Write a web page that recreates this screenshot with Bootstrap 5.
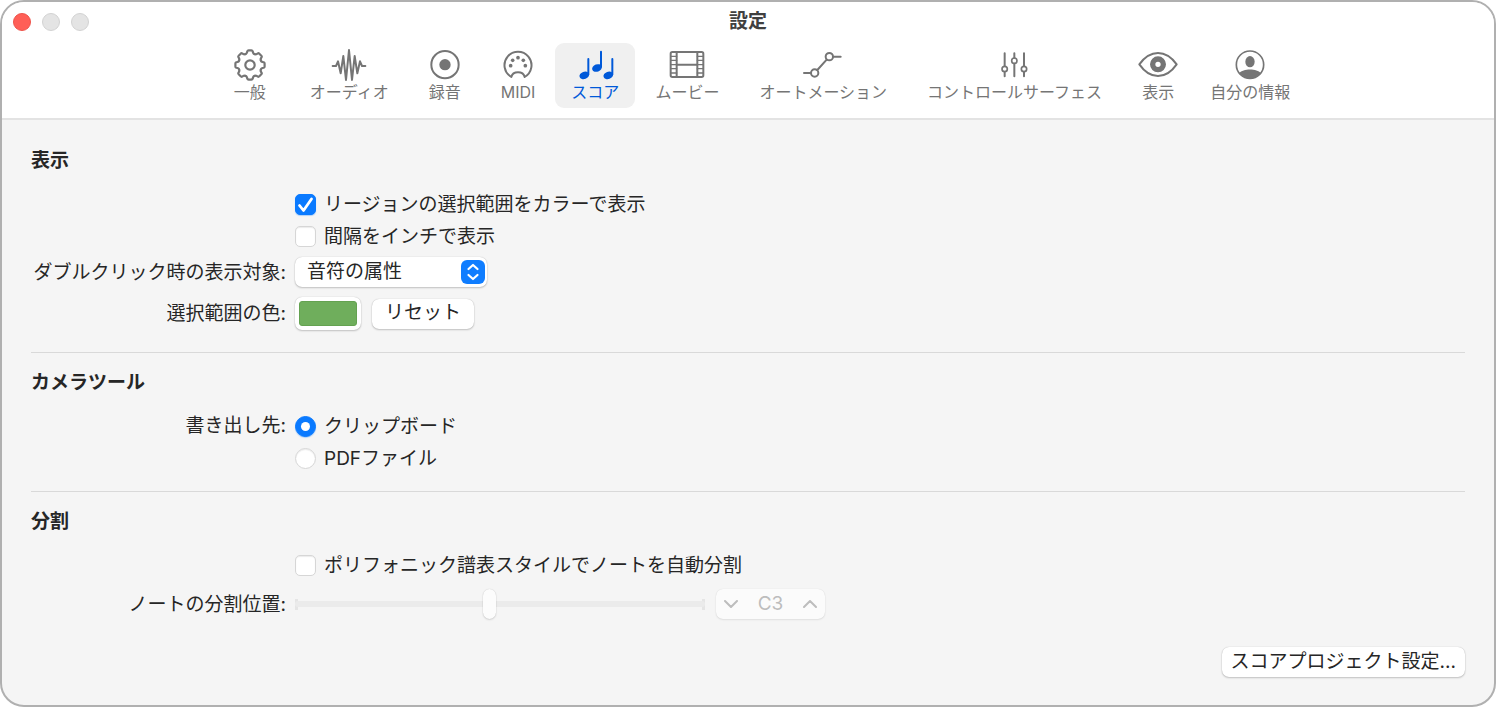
<!DOCTYPE html>
<html lang="ja">
<head>
<meta charset="utf-8">
<meta name="viewport" content="width=device-width, initial-scale=1">
<title>設定</title>
<link href="https://cdn.jsdelivr.net/npm/bootstrap@5.3.0/dist/css/bootstrap.min.css" rel="stylesheet">
<style>
  body { font-family: Inter, "Noto Sans CJK JP", sans-serif; font-size: 19px; line-height: 28px; color: #262626; background: #fff; }
  .app-window { margin: 0 2px 2px 0; border: 2px solid #b0b0b0; border-radius: 24px; background: #f5f5f5; overflow: hidden; }
  .window-head { background: #fff; border-bottom: 2px solid #e3e3e3; }

  .title-bar { display: grid; grid-template-columns: 1fr auto 1fr; align-items: center; height: 40px; padding: 0 11px; }
  .title-bar h1 { font-size: 19px; line-height: 28px; font-weight: 700; color: #404040; }
  .lights, .pair { gap: 11px; }
  .light { width: 18px; height: 18px; padding: 0; border: 1px solid #d2d2d2; border-radius: 50%; background: #e4e4e4; }
  .light-close { background: #ff5f57; border-color: #ee534b; }

  .tool-bar { padding: 1px 0 10px 28px; gap: 4px; }
  .tool { padding: 6px 16px; gap: 1px; border: 0; border-radius: 9px; background: transparent; color: #757575; font-size: 16px; line-height: 20px; white-space: nowrap; }
  .tool.active { background: #f0f0f0; color: #0059d9; }
  .tool svg { width: 40px; height: 32px; margin: 0 -4px; fill: none; stroke: currentColor; stroke-linecap: round; stroke-linejoin: round; }
  .solid { fill: currentColor; stroke: none; }

  .pane { padding: 11px 29px 28px; }
  .pane section { padding: 16px 0 17px; }
  .pane section + section { border-top: 1px solid #d9d9d9; }
  .pane section:last-of-type { padding-bottom: 0; }
  .pane h2 { font-size: 19px; line-height: 28px; font-weight: 700; margin: 0 0 13px; }
  .pane label { padding-top: 1px; }
  .setting { display: grid; grid-template-columns: 255px 1fr; column-gap: 9px; align-items: center; min-height: 32px; }
  .setting > :first-child { text-align: right; white-space: nowrap; }
  .setting > :only-child { grid-column: 2; text-align: left; }
  .setting-select { min-height: 40px; }
  .setting-color { min-height: 43px; }
  .setting-slider { min-height: 46px; }

  .tick.form-check-input { width: 21px; height: 21px; margin: 0; border: 1px solid #d6d6d6; background-color: #fff; box-shadow: inset 0 1px 1px rgba(0,0,0,.08); }
  .tick.form-check-input[type=checkbox] { border-radius: 5px; }
  .tick.form-check-input:checked { border-color: #0a7aff; background-color: #0a7aff; box-shadow: 0 1px 1px rgba(10,122,255,.3); }
  .tick.form-check-input:checked[type=checkbox] { background-size: 21px; background-position: center; background-image: url("data:image/svg+xml,%3csvg xmlns='http://www.w3.org/2000/svg' viewBox='0 0 21 21'%3e%3cpath d='M4.500 11.500l4 5L16.500 5' fill='none' stroke='%23fff' stroke-width='2.800' stroke-linecap='round' stroke-linejoin='round'/%3e%3c/svg%3e"); }
  .tick.form-check-input:checked[type=radio] { background-size: 21px; background-position: center; background-image: url("data:image/svg+xml,%3csvg xmlns='http://www.w3.org/2000/svg' viewBox='0 0 21 21'%3e%3ccircle cx='10.500' cy='10.500' r='4.500' fill='%23fff'/%3e%3c/svg%3e"); }

  .raised { border: 0; border-radius: 7px; background-color: #fff; color: #262626; font-size: 19px; line-height: 28px; box-shadow: 0 0 1px rgba(0,0,0,.25), 0 1px 2px rgba(0,0,0,.2); }
  .btn.raised { height: 30px; padding: 0 13px 1px; }
  .btn.raised.btn-tight { padding: 0 9px 1px; }
  .pop-up.form-select { width: 192px; height: 30px; padding: 0 32px 0 12px; background-size: 24px 24px; background-position: right 2px center; background-image: url("data:image/svg+xml,%3csvg xmlns='http://www.w3.org/2000/svg' viewBox='0 0 24 24'%3e%3crect width='24' height='24' rx='6' fill='%230f7dff'/%3e%3cpath d='M7.500 9L12 5l4.500 4M7.500 15l4.500 4 4.500-4' fill='none' stroke='%23fff' stroke-width='2.200' stroke-linecap='round' stroke-linejoin='round'/%3e%3c/svg%3e"); }
  .well.form-control-color { width: 66px; height: 33px; padding: 4px; border-radius: 7px; }
  .well::-webkit-color-swatch-wrapper { padding: 0; }
  .well.form-control-color::-webkit-color-swatch { border: 1px solid #64a251; border-radius: 3px; }

  .split-range.form-range { width: 410px; height: 30px; background: linear-gradient(#e5e5e5,#e5e5e5) left center/3px 11px no-repeat, linear-gradient(#e5e5e5,#e5e5e5) right center/3px 11px no-repeat; }
  .split-range.form-range::-webkit-slider-runnable-track { height: 6px; background: #ebebeb; border-radius: 3px; }
  .split-range.form-range::-webkit-slider-thumb { width: 13px; height: 30px; margin-top: -12px; border-radius: 7px; background: #fcfcfc; box-shadow: 0 0 1px rgba(0,0,0,.2), 0 1px 2px rgba(0,0,0,.12); }
  .stepper { width: 109px; height: 30px; border-radius: 7px; background: #fbfbfb; color: #bdbdbd; box-shadow: 0 0 1px rgba(0,0,0,.14), 0 1px 2px rgba(0,0,0,.08); }
  .stepper button { width: 30px; height: 30px; padding: 0; border: 0; background: none; color: inherit; }
  .stepper svg { display: block; margin: auto; width: 14px; height: 8px; fill: none; stroke: currentColor; stroke-width: 2; stroke-linecap: round; stroke-linejoin: round; }
  .pane-foot { margin-top: 20px; }
</style>
</head>
<body>
<main class="app-window">
  <header class="window-head">
    <div class="title-bar">
      <div class="lights d-flex">
        <button class="light light-close" type="button" aria-label="閉じる"></button>
        <button class="light" type="button" aria-label="しまう" disabled></button>
        <button class="light" type="button" aria-label="拡大" disabled></button>
      </div>
      <h1 class="m-0">設定</h1>
    </div>
    <nav class="tool-bar d-flex justify-content-center">
      <button type="button" class="tool me-2 d-flex flex-column align-items-center">
        <svg viewBox="-20 -16 40 32" stroke-width="2.200">
          <defs><path id="tooth" d="M-4.500-10.900C-3.700-11.200-3.200-11.600-3-12.400L-2.700-13.700Q-2.400-14.600-1.400-14.600H1.400Q2.400-14.600 2.700-13.700L3-12.400C3.200-11.600 3.700-11.200 4.500-10.900"/></defs>
          <use href="#tooth"/><use href="#tooth" transform="rotate(45)"/><use href="#tooth" transform="rotate(90)"/><use href="#tooth" transform="rotate(135)"/><use href="#tooth" transform="rotate(180)"/><use href="#tooth" transform="rotate(225)"/><use href="#tooth" transform="rotate(270)"/><use href="#tooth" transform="rotate(315)"/>
          <circle r="4.700"/></svg>
        <span>一般</span></button>
      <button type="button" class="tool me-1 d-flex flex-column align-items-center">
        <svg viewBox="-60 -48 120 96" stroke-width="6"><path d="M-49 3h10l6-14 8 36 8-52 8 72 9-90 9 90 8-72 8 52 8-36 6 14h10"/></svg>
        <span>オーディオ</span></button>
      <button type="button" class="tool me-1 d-flex flex-column align-items-center">
        <svg viewBox="-60 -48 120 96" stroke-width="6"><circle cy="-1" r="41"/><circle class="solid" cy="-1" r="17"/></svg>
        <span>録音</span></button>
      <button type="button" class="tool d-flex flex-column align-items-center">
        <svg viewBox="-60 -48 120 96" stroke-width="6"><path d="M-20 36A40.500 40.500 0 1 1 20 36C17 24 9 22 0 22S-17 24-20 36Z"/><g class="solid"><circle cx="-22" cy="2" r="5.500"/><circle cx="-16" cy="-14" r="5.500"/><circle cy="-22" r="5.500"/><circle cx="16" cy="-14" r="5.500"/><circle cx="22" cy="2" r="5.500"/></g></svg>
        <span>MIDI</span></button>
      <button type="button" class="tool active d-flex flex-column align-items-center" aria-current="page">
        <svg viewBox="-60 -48 120 96" stroke-width="6"><path d="M-20-18V28M18-40V5M52-18V28"/><g class="solid"><ellipse transform="translate(-32 31) rotate(-20)" rx="15" ry="11"/><ellipse transform="translate(6 9) rotate(-20)" rx="15" ry="11"/><ellipse transform="translate(40 31) rotate(-20)" rx="15" ry="11"/></g></svg>
        <span>スコア</span></button>
      <button type="button" class="tool me-1 d-flex flex-column align-items-center">
        <svg viewBox="-60 -48 120 96" stroke-width="6"><rect x="-49" y="-39" width="98" height="75" rx="5"/><path d="M-31-39V36M31-39V36M-31-1H31"/><path stroke-width="4" d="M-49-26h18M-49-14h18M-49-1h18M-49 11h18M-49 24h18M31-26h18M31-14h18M31-1h18M31 11h18M31 24h18"/></svg>
        <span>ムービー</span></button>
      <button type="button" class="tool me-1 d-flex flex-column align-items-center">
        <svg viewBox="-60 -48 120 96" stroke-width="6"><circle cx="-25" cy="24" r="11"/><circle cx="19" cy="-25" r="11"/><path d="M-57 24h20M31-25h22M-17 15 11-16"/></svg>
        <span>オートメーション</span></button>
      <button type="button" class="tool me-1 d-flex flex-column align-items-center">
        <svg viewBox="-60 -48 120 96" stroke-width="6"><path d="M-31-35V3M-31 21V34M-2-35V-22M-2-4V34M27-35V3M27 21V34"/><g stroke-width="5"><circle cx="-31" cy="12" r="8"/><circle cx="-2" cy="-13" r="8"/><circle cx="27" cy="12" r="8"/></g></svg>
        <span>コントロールサーフェス</span></button>
      <button type="button" class="tool d-flex flex-column align-items-center">
        <svg viewBox="-60 -48 120 96" stroke-width="6"><path d="M-56-2C-40-24-20-36 0-36S40-24 56-2C40 21 20 33 0 33S-40 21-56-2Z"/><circle cy="-2" r="16" stroke-width="16"/></svg>
        <span>表示</span></button>
      <button type="button" class="tool d-flex flex-column align-items-center">
        <svg viewBox="-60 -48 120 96" stroke-width="5"><circle cy="-1" r="41"/><g class="solid"><ellipse cy="-10" rx="14" ry="17"/><path d="M-32 25C-22 10 22 10 32 25A41 41 0 0 1-32 25Z"/></g></svg>
        <span>自分の情報</span></button>
    </nav>
  </header>

  <form class="pane" onsubmit="return false">
    <section>
      <h2>表示</h2>
      <div class="setting">
        <div class="d-flex align-items-center gap-2"><input class="form-check-input tick" type="checkbox" id="regionColor" checked><label for="regionColor">リージョンの選択範囲をカラーで表示</label></div>
      </div>
      <div class="setting">
        <div class="d-flex align-items-center gap-2"><input class="form-check-input tick" type="checkbox" id="inches"><label for="inches">間隔をインチで表示</label></div>
      </div>
      <div class="setting setting-select">
        <label for="dblClick">ダブルクリック時の表示対象:</label>
        <select class="form-select pop-up raised" id="dblClick"><option>音符の属性</option></select>
      </div>
      <div class="setting setting-color">
        <label for="selColor">選択範囲の色:</label>
        <div class="pair d-flex align-items-center">
          <input class="form-control form-control-color well raised" type="color" id="selColor" value="#6fae5c">
          <button class="btn raised" type="button">リセット</button>
        </div>
      </div>
    </section>

    <section>
      <h2>カメラツール</h2>
      <div class="setting">
        <span id="exportTo">書き出し先:</span>
        <div class="d-flex align-items-center gap-2"><input class="form-check-input tick" type="radio" name="export" id="clip" aria-describedby="exportTo" checked><label for="clip">クリップボード</label></div>
      </div>
      <div class="setting">
        <div class="d-flex align-items-center gap-2"><input class="form-check-input tick" type="radio" name="export" id="pdf" aria-describedby="exportTo"><label for="pdf">PDFファイル</label></div>
      </div>
    </section>

    <section>
      <h2>分割</h2>
      <div class="setting">
        <div class="d-flex align-items-center gap-2"><input class="form-check-input tick" type="checkbox" id="autoSplit"><label for="autoSplit">ポリフォニック譜表スタイルでノートを自動分割</label></div>
      </div>
      <div class="setting setting-slider">
        <label for="splitNote">ノートの分割位置:</label>
        <div class="pair d-flex align-items-center">
          <input class="form-range split-range" type="range" id="splitNote" min="0" max="127" value="60" disabled>
          <div class="stepper d-flex align-items-center justify-content-between">
            <button type="button" aria-label="下げる" disabled><svg viewBox="0 0 14 8"><path d="M1 1l6 6 6-6"/></svg></button>
            <output for="splitNote">C3</output>
            <button type="button" aria-label="上げる" disabled><svg viewBox="0 0 14 8"><path d="M1 7l6-6 6 6"/></svg></button>
          </div>
        </div>
      </div>
    </section>

    <div class="pane-foot d-flex justify-content-end">
      <button class="btn raised btn-tight" type="button">スコアプロジェクト設定...</button>
    </div>
  </form>
</main>
<script src="https://cdn.jsdelivr.net/npm/bootstrap@5.3.0/dist/js/bootstrap.bundle.min.js"></script>
</body>
</html>
